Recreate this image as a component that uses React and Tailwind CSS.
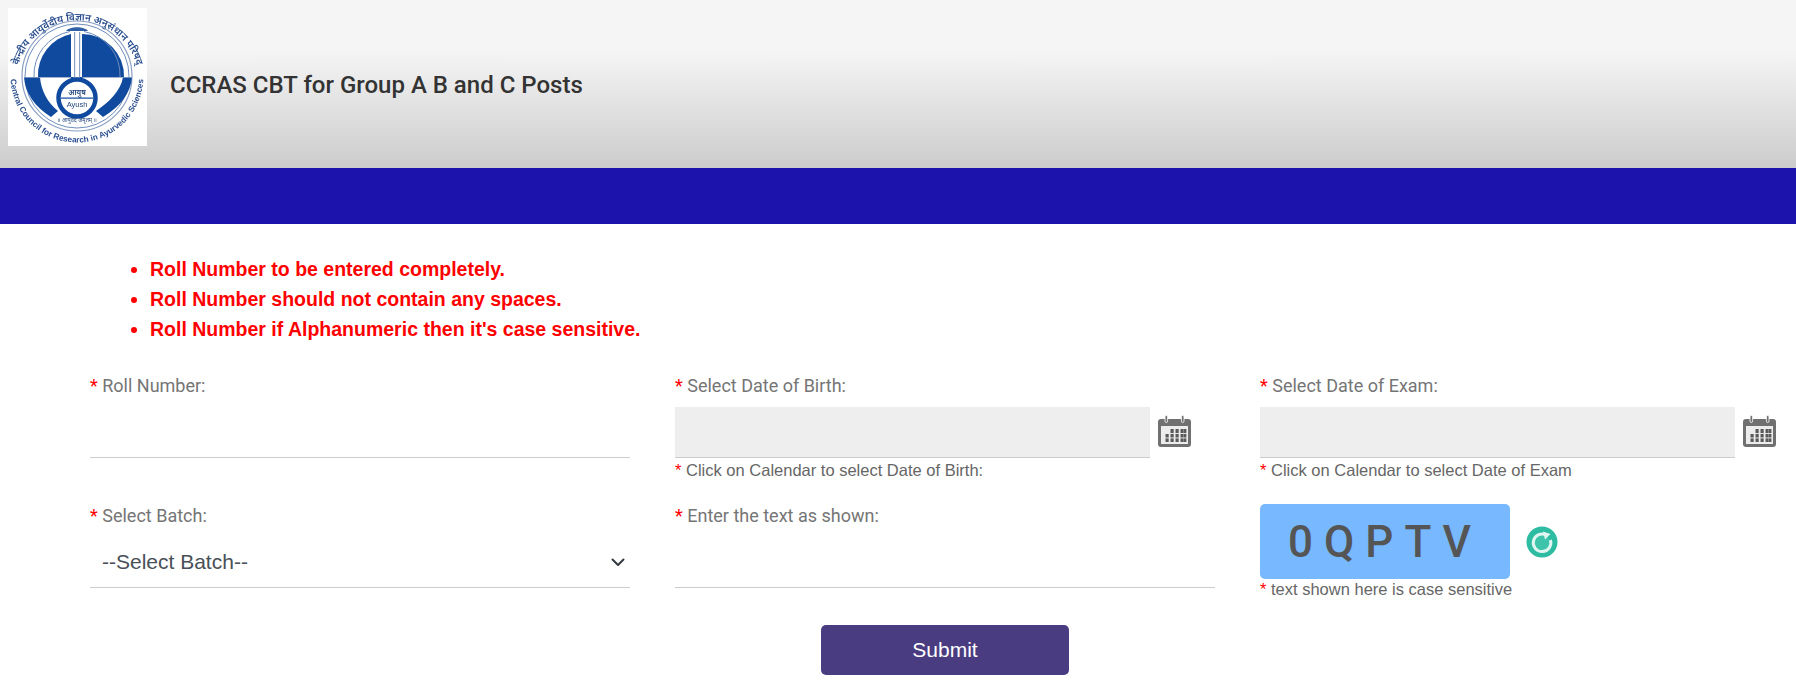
import React from "react";

const roboto = "font-['Roboto',sans-serif]";
const arial = "font-['Liberation_Sans',Arial,sans-serif]";

function Logo() {
  const blue = "#0f4a9e";
  return (
    <svg viewBox="0 0 139 138" className="w-[139px] h-[138px] shrink-0 bg-white">
      <defs>
        <path id="topArc" d="M 8 74 A 61.5 61.5 0 1 1 131 74" />
        <path id="botArc" d="M 2.5 68 A 66.5 66.5 0 0 0 135.5 68" />
      </defs>
      <g style={{ filter: "blur(0.5px)" }}>
        <text fontSize="10" fill="#2b4f8f" fontFamily="'Noto Sans','DejaVu Sans',sans-serif" fontWeight="600">
          <textPath href="#topArc" startOffset="50%" textAnchor="middle">केन्द्रीय आयुर्वेदीय विज्ञान अनुसंधान परिषद्</textPath>
        </text>
        <text fontSize="8.2" fill="#2b4f8f" fontFamily="'Liberation Sans',sans-serif" fontWeight="700">
          <textPath href="#botArc" startOffset="50%" textAnchor="middle">Central Council for Research in Ayurvedic Sciences</textPath>
        </text>
        <circle cx="69" cy="68" r="55" fill="none" stroke="#8aa0c4" strokeWidth="1.2" />
        <circle cx="69" cy="68" r="52" fill="none" stroke="#6f8dbb" strokeWidth="1" />
        <path d="M 63 26 L 63 69 L 30 69 A 42 42 0 0 1 63 26 Z" fill={blue} />
        <path d="M 74 26 A 42 42 0 0 1 116 69 L 74 69 Z" fill={blue} />
        <path d="M 26 69 A 44 44 0 0 1 62 23.5" fill="none" stroke="#6f8dbb" strokeWidth="1" />
        <path d="M 112 69 A 44 44 0 0 0 76 23.5" fill="none" stroke="#6f8dbb" strokeWidth="1" />
        <path d="M 58 23 C 62 18 76 18 80 23 Z" fill="#2f5fa5" />
        <path d="M 16 69 L 32 69 C 33 83 40 95 50 103 L 43 109 C 27 99 17 85 16 69 Z" fill={blue} />
        <path d="M 124 69 L 115 69 C 113 83 100 95 88 103 L 95 109 C 112 99 123 85 124 69 Z" fill={blue} />
        <rect x="16" y="69" width="108" height="0.8" fill="#8aa0c4" />
        <rect x="66" y="24" width="1.2" height="46" fill="#8aa0c4" />
        <rect x="71" y="24" width="1.2" height="46" fill="#8aa0c4" />
        <rect x="63" y="69" width="2.5" height="4" fill={blue} />
        <rect x="72" y="69" width="2.5" height="4" fill={blue} />
        <circle cx="69" cy="90" r="18.5" fill="#fff" stroke={blue} strokeWidth="4.5" />
        <rect x="53" y="89.5" width="32" height="1.2" fill={blue} />
        <text x="69" y="87" textAnchor="middle" fontSize="7.5" fill="#27497f" fontFamily="'Noto Sans',sans-serif" fontWeight="600">आयुष</text>
        <text x="69" y="99" textAnchor="middle" fontSize="7.5" fill="#27497f" fontFamily="'Liberation Sans',sans-serif">Ayush</text>
        <text x="69" y="114" textAnchor="middle" fontSize="5.5" fill="#27497f" fontFamily="'Noto Sans',sans-serif">॥ आयुर्वेदं अमृतम् ॥</text>
      </g>
    </svg>
  );
}

function Calendar() {
  return (
    <svg viewBox="0 0 33 32" className="w-[33px] h-[32px] shrink-0">
      <g style={{ filter: "blur(0.4px)" }}>
        <path d="M3 4h27a3 3 0 0 1 3 3v22a3 3 0 0 1-3 3H3a3 3 0 0 1-3-3V7a3 3 0 0 1 3-3z" fill="#707070" />
        <rect x="3" y="11" width="27" height="18" fill="#ececec" />
        <rect x="7" y="0.5" width="2.6" height="7" rx="1.3" fill="#707070" stroke="#fff" strokeWidth="0.8" />
        <rect x="23.4" y="0.5" width="2.6" height="7" rx="1.3" fill="#707070" stroke="#fff" strokeWidth="0.8" />
        <g fill="#5a5a5a">
          {[12.5, 17.5, 22.5].map((x) => <rect key={x} x={x} y="14" width="3.2" height="13" />)}
          <rect x="7.5" y="19" width="3.2" height="8" />
          <rect x="26" y="14" width="2.4" height="13" />
        </g>
        <g fill="#ececec">
          <rect x="5" y="18" width="24" height="0.9" />
          <rect x="5" y="22.5" width="24" height="0.9" />
        </g>
      </g>
    </svg>
  );
}

function Refresh() {
  return (
    <svg viewBox="0 0 32 32" className="w-[32px] h-[32px] shrink-0">
      <g style={{ filter: "blur(0.5px)" }}>
        <circle cx="16" cy="16" r="15.5" fill="#2dbba2" />
        <circle cx="16" cy="16.5" r="8" fill="#3fc4ac" />
        <path d="M20.5 9.2 A 8.8 8.8 0 1 0 24.4 14" fill="none" stroke="#dff6f1" strokeWidth="3" />
        <path d="M17 5.5l7.5 2.5-5.5 5.5z" fill="#dff6f1" />
      </g>
    </svg>
  );
}

function Star() {
  return <span className="text-[#ff0000]">*</span>;
}

function Label({ children }) {
  return (
    <label className={`${roboto} block h-[22px] text-[18px] leading-[22px] text-[#757575]`}>
      <Star /> {children}
    </label>
  );
}

function Help({ children }) {
  return (
    <p className={`${arial} text-[16.5px] leading-[20px] text-[#666666]`}>
      <Star /> {children}
    </p>
  );
}

function DateField({ label, help }) {
  return (
    <div>
      <Label>{label}</Label>
      <div className="mt-[10px] flex items-start">
        <div className="h-[51px] w-[475px] bg-[#eeeeee] border-b border-[#cccccc]" />
        <span className="ml-[8px] mt-[8px]"><Calendar /></span>
      </div>
      <div className="mt-[2px]"><Help>{help}</Help></div>
    </div>
  );
}

export default function App() {
  return (
    <div className={`${roboto} w-full h-[686px] overflow-hidden bg-white`}>
      <header className="flex h-[168px] items-start bg-[linear-gradient(to_bottom,#f5f5f5_0%,#f5f5f5_30%,#cccccc_100%)] pl-[8px] pt-[8px]">
        <Logo />
        <h1 className="ml-[23px] mt-[61px] text-[24px] leading-[32px] font-medium text-[#333333]">
          CCRAS CBT for Group A B and C Posts
        </h1>
      </header>
      <div className="h-[56px] bg-[#1b13ab]" />

      <ul className={`${arial} ml-[150px] mt-[30px] list-disc text-[19.5px] font-bold leading-[30px] text-[#ff0000]`}>
        <li>Roll Number to be entered completely.</li>
        <li>Roll Number should not contain any spaces.</li>
        <li>Roll Number if Alphanumeric then it's case sensitive.</li>
      </ul>

      <div className="ml-[90px] mt-[31px] grid grid-cols-[540px_540px_1fr] grid-rows-[130px_auto] gap-x-[45px]">
        <div>
          <Label>Roll Number:</Label>
          <div className="mt-[10px] h-[51px] border-b border-[#cccccc]" />
        </div>
        <DateField label="Select Date of Birth:" help="Click on Calendar to select Date of Birth:" />
        <DateField label="Select Date of Exam:" help="Click on Calendar to select Date of Exam" />

        <div>
          <Label>Select Batch:</Label>
          <div className={`${arial} mt-[10px] flex h-[51px] items-center justify-between border-b border-[#cccccc] pl-[12px] pr-[4px] text-[21px] text-[#495057]`}>
            <span>--Select Batch--</span>
            <svg viewBox="0 0 16 16" className="h-[16px] w-[16px]" fill="none" stroke="#343a40" strokeWidth="2" strokeLinecap="round" strokeLinejoin="round">
              <path d="M2.5 5.5l5.5 5.5 5.5-5.5" />
            </svg>
          </div>
        </div>
        <div>
          <Label>Enter the text as shown:</Label>
          <div className="mt-[10px] h-[51px] border-b border-[#cccccc]" />
        </div>
        <div className="-mt-px">
          <div className="flex items-center">
            <div className={`${roboto} flex h-[75px] w-[250px] items-center rounded-[5px] bg-[#77b8ff] pl-[28px] text-[44px] font-medium tracking-[11px] text-[#555555]`}>
              0QPTV
            </div>
            <span className="ml-[16px]"><Refresh /></span>
          </div>
          <Help>text shown here is case sensitive</Help>
        </div>
      </div>

      <div className="ml-[821px] mt-[26px]">
        <button className={`${arial} h-[50px] w-[248px] rounded-[5px] bg-[#4a3c80] text-[21px] text-white`}>Submit</button>
      </div>
    </div>
  );
}
